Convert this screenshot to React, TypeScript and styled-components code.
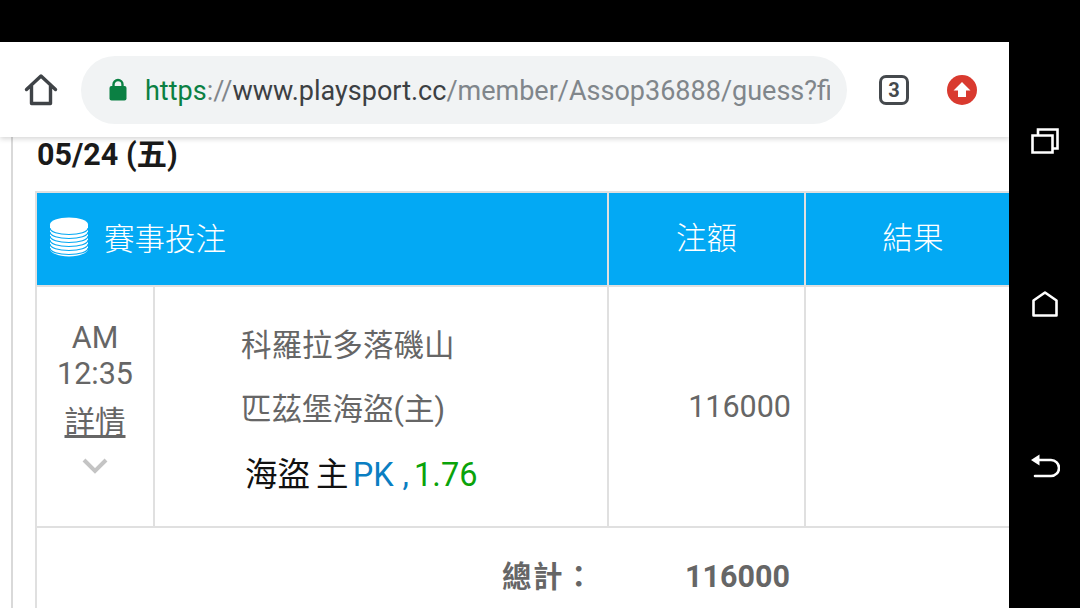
import styled, { createGlobalStyle } from "styled-components";

const cjk = `Roboto, "Noto Sans CJK TC", sans-serif`;

const GlobalStyle = createGlobalStyle`
  html, body {
    margin: 0;
    height: 100%;
    background: #000;
    overflow: hidden;
  }
  * {
    box-sizing: border-box;
  }
`;

const Device = styled.div`
  display: flex;
  width: 1080px;
  height: 608px;
  background: #000;
  font-family: ${cjk};
`;

const Screen = styled.div`
  display: flex;
  flex-direction: column;
  width: 1009px;
  padding-top: 42px;
  overflow: hidden;
`;

const Toolbar = styled.header`
  position: relative;
  z-index: 2;
  display: flex;
  align-items: center;
  flex: 0 0 95px;
  padding: 0 0 0 24px;
  background: #fff;
  box-shadow: 0 2px 5px rgba(0, 0, 0, 0.16);
`;

const UrlBar = styled.div`
  display: flex;
  align-items: center;
  width: 766px;
  height: 68px;
  margin-left: 23px;
  padding: 0 17px 0 28px;
  border-radius: 34px;
  background: #f1f3f4;
  overflow: hidden;
`;

const UrlText = styled.div`
  margin-left: 18px;
  padding-top: 2px;
  font-size: 27px;
  white-space: nowrap;
  overflow: hidden;
  color: #80868b;
`;

const Scheme = styled.span`
  color: #0b8043;
`;

const Host = styled.span`
  color: #3c4043;
`;

const TabCount = styled.div`
  display: flex;
  align-items: center;
  justify-content: center;
  width: 30px;
  height: 30px;
  margin-left: 32px;
  border: 3px solid #45494d;
  border-radius: 7px;
  color: #45494d;
  font-size: 20px;
  font-weight: 700;
`;

const UpdateBadge = styled.div`
  display: flex;
  margin-left: 38px;
`;

const Content = styled.main`
  flex: 1;
  padding-left: 11px;
  background: #fff;
`;

const Page = styled.div`
  height: 100%;
  padding-left: 22px;
  border-left: 2px solid #d9d9d9;
`;

const DateTitle = styled.h2`
  margin: 0;
  height: 54px;
  padding: 1px 0 0 2px;
  font-size: 30.5px;
  line-height: 34px;
  font-weight: 700;
  color: #1a1a1a;
`;

const Table = styled.div`
  display: grid;
  grid-template-columns: 118px 454px 197px 216px;
  grid-template-rows: 94px 241px 1fr;
  width: 985px;
  height: 418px;
  border-top: 2px solid #e0e0e0;
  border-left: 2px solid #e0e0e0;
`;

const HeadCell = styled.div<{ $start?: boolean }>`
  grid-column: ${(p) => (p.$start ? "span 2" : "auto")};
  display: flex;
  align-items: center;
  justify-content: ${(p) => (p.$start ? "flex-start" : "center")};
  gap: 15px;
  padding: ${(p) => (p.$start ? "0 0 4px 12px" : "0 0 6px")};
  background: #03a9f4;
  border-right: 2px solid #e0e0e0;
  border-bottom: 2px solid #e0e0e0;
  color: #fff;
  font-size: 30.5px;
  font-weight: 300;
`;

const Cell = styled.div`
  border-right: 2px solid #e0e0e0;
  border-bottom: 2px solid #e0e0e0;
  color: #666;
  font-size: 30.5px;
`;

const TimeCell = styled(Cell)`
  display: flex;
  flex-direction: column;
  align-items: center;
  padding-top: 33px;
  line-height: 36px;
`;

const DetailLink = styled.a`
  margin-top: 12px;
  line-height: 38px;
  color: #666;
  text-decoration: underline;
  text-underline-offset: 2px;
`;

const Chevron = styled.svg`
  margin-top: 15px;
`;

const MatchCell = styled(Cell)`
  display: flex;
  flex-direction: column;
  padding: 28px 0 0 86px;
`;

const TeamName = styled.div`
  height: 64px;
  line-height: 62px;
`;

const Pick = styled.div`
  margin-left: 4px;
  font-size: 32.5px;
  line-height: 64px;
  word-spacing: -2px;
  color: #111;
  white-space: pre;
`;

const Handicap = styled.span`
  margin: 0 -1px 0 -2px;
  word-spacing: 1px;
  color: #0a7ec2;
`;

const Odds = styled.span`
  color: #0aa30a;
`;

const AmountCell = styled(Cell)`
  display: flex;
  align-items: center;
  justify-content: flex-end;
  padding: 0 13px 0 0;
`;

const TotalRow = styled.div`
  grid-column: 1 / -1;
  display: flex;
  font-weight: 700;
  color: #666;
  font-size: 30.5px;
  padding-top: 26px;
  line-height: 46px;
`;

const TotalLabel = styled.div`
  width: 558px;
  font-size: 29.5px;
  text-align: right;
  letter-spacing: 1.5px;
`;

const TotalValue = styled.div`
  margin-left: 90px;
`;

const NavBar = styled.nav`
  display: flex;
  flex-direction: column;
  align-items: center;
  width: 71px;
  padding-top: 128px;
`;

const NavIcon = styled.svg<{ $gap: number }>`
  display: block;
  margin-bottom: ${(p) => p.$gap}px;
`;

const HomeIcon = () => (
  <svg width="34" height="34" viewBox="0 0 34 34" fill="none">
    <path
      d="M2.5 16.5 17 3l14.5 13.5M7.5 13v17.5h19V13"
      stroke="#3f4347"
      strokeWidth="3.4"
      strokeLinejoin="round"
      strokeLinecap="round"
    />
  </svg>
);

const LockIcon = () => (
  <svg width="18" height="24" viewBox="0 0 18 24" style={{ flex: "none" }}>
    <path
      d="M4.5 9V6.5a4.5 4.5 0 0 1 9 0V9"
      fill="none"
      stroke="#0b8043"
      strokeWidth="2.4"
    />
    <rect x="0.5" y="8" width="17" height="14.5" rx="2" fill="#0b8043" />
  </svg>
);

const UpdateIcon = () => (
  <svg width="30" height="30" viewBox="0 0 30 30">
    <circle cx="15" cy="15" r="15" fill="#d93a2f" />
    <path d="M15 7 23.5 15.5H19V22H11V15.5H6.5Z" fill="#fff" />
  </svg>
);

const chipBands = [11, 15, 19, 23, 27, 31];

const ChipsIcon = () => (
  <svg width="40" height="40" viewBox="0 0 40 40" fill="none">
    <path
      d="M1 7.500C1 3.500 9.500.5 20 .5s19 3 19 7V32c0 4-8.500 7.500-19 7.500S1 36 1 32Z"
      fill="#fff"
    />
    {chipBands.map((y) => (
      <path
        key={y}
        d={`M1 ${y}c0 4 8.500 6.500 19 6.500s19-2.500 19-6.500`}
        stroke="#03a9f4"
        strokeWidth="1.2"
      />
    ))}
  </svg>
);

export default function App() {
  return (
    <>
      <GlobalStyle />
      <Device>
        <Screen>
          <Toolbar>
            <HomeIcon />
            <UrlBar>
              <LockIcon />
              <UrlText>
                <Scheme>https</Scheme>://
                <Host>www.playsport.cc</Host>/member/Assop36888/guess?fi
              </UrlText>
            </UrlBar>
            <TabCount>3</TabCount>
            <UpdateBadge>
              <UpdateIcon />
            </UpdateBadge>
          </Toolbar>
          <Content>
            <Page>
              <DateTitle>05/24 (五)</DateTitle>
              <Table>
                <HeadCell $start>
                  <ChipsIcon />
                  賽事投注
                </HeadCell>
                <HeadCell>注額</HeadCell>
                <HeadCell>結果</HeadCell>
                <TimeCell>
                  <span>AM</span>
                  <span>12:35</span>
                  <DetailLink>詳情</DetailLink>
                  <Chevron width="26" height="18" viewBox="0 0 26 18" fill="none">
                    <path d="M2 3l11 11L24 3" stroke="#c4c4c4" strokeWidth="4" />
                  </Chevron>
                </TimeCell>
                <MatchCell>
                  <TeamName>科羅拉多落磯山</TeamName>
                  <TeamName>匹茲堡海盜(主)</TeamName>
                  <Pick>
                    海盜 主 <Handicap>PK ,</Handicap> <Odds>1.76</Odds>
                  </Pick>
                </MatchCell>
                <AmountCell>116000</AmountCell>
                <Cell />
                <TotalRow>
                  <TotalLabel>總計：</TotalLabel>
                  <TotalValue>116000</TotalValue>
                </TotalRow>
              </Table>
            </Page>
          </Content>
        </Screen>
        <NavBar>
          <NavIcon $gap={137} width="28" height="26" viewBox="0 0 28 26" fill="none">
            <path d="M1.500 7.500H21.500V24.500H1.500ZM7 6.500V1.500H26.500V20.500H22" stroke="#fff" strokeWidth="2.600" />
          </NavIcon>
          <NavIcon $gap={135} width="26" height="26" viewBox="0 0 26 26" fill="none">
            <path d="M1.500 9.500 13 1.500l11.500 8v15H1.500Z" stroke="#fff" strokeWidth="2.600" strokeLinejoin="round" />
          </NavIcon>
          <NavIcon $gap={0} width="30" height="28" viewBox="0 0 30 28" fill="none">
            <path d="M9 8h12a7.500 7.500 0 0 1 0 16H5" stroke="#fff" strokeWidth="2.600" strokeLinecap="round" />
            <path d="M1 8 9.500 2.500v11Z" fill="#fff" />
          </NavIcon>
        </NavBar>
      </Device>
    </>
  );
}
